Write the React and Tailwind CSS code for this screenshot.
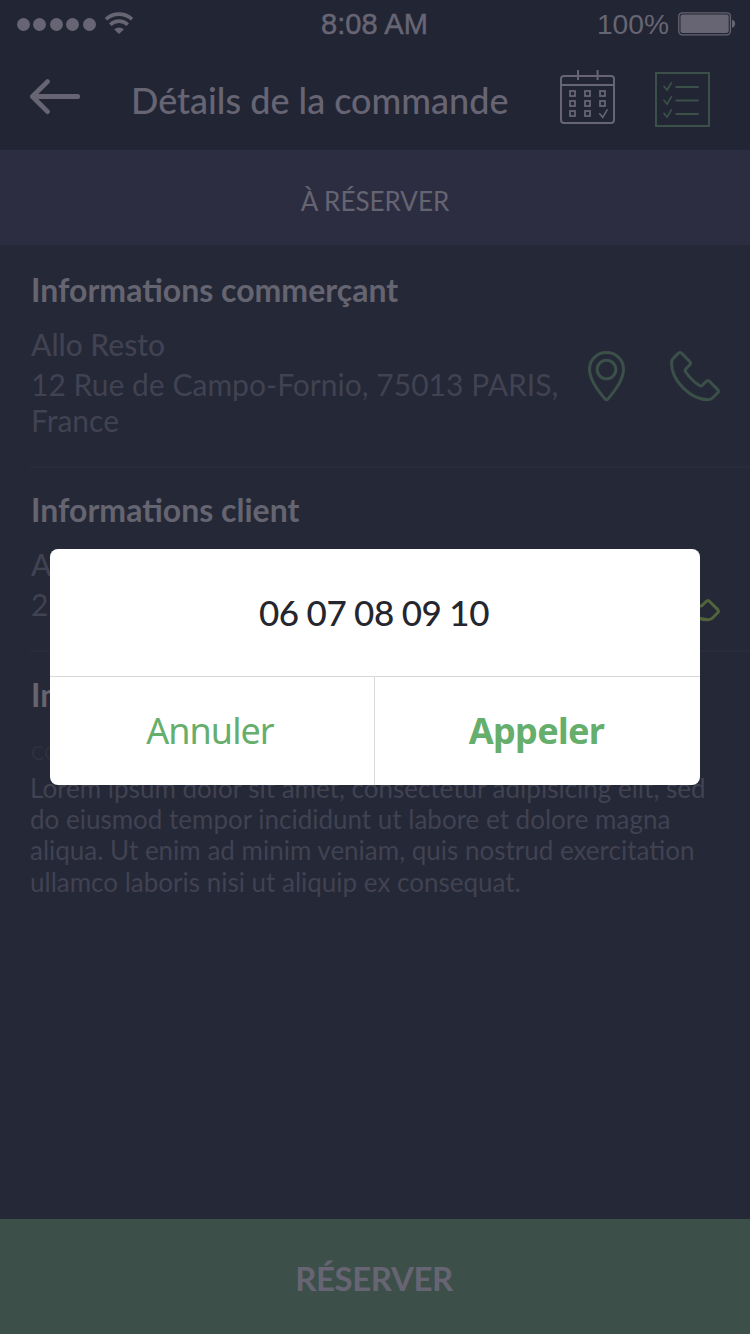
const lato = "font-[Lato,'Liberation_Sans',sans-serif]";

function WifiIcon() {
  return (
    <svg width="28" height="22" viewBox="0 0 28 22" fill="none" stroke="#676573" strokeWidth="3.6">
      <path d="M1 7.3a19 19 0 0 1 26 0" />
      <path d="M5.3 12.7a12.4 12.4 0 0 1 17.4 0" />
      <path d="M9.2 17.4a6.8 6.8 0 0 1 9.6 0L14 22z" fill="#676573" stroke="none" />
    </svg>
  );
}

function BatteryIcon() {
  return (
    <svg width="58" height="24" viewBox="0 0 58 24" fill="none">
      <rect x="0.8" y="0.8" width="51.6" height="22" rx="3.5" stroke="#676573" strokeWidth="1.3" />
      <rect x="2.5" y="2.5" width="48.2" height="18.6" rx="2" fill="#676573" />
      <path d="M54 7.8c4.2 1 4.2 7 0 8z" fill="#676573" />
    </svg>
  );
}

function BackIcon() {
  return (
    <svg width="50" height="36" viewBox="0 0 50 36" fill="none" stroke="#676573" strokeWidth="4.8" strokeLinecap="round" strokeLinejoin="round">
      <path d="M17.5 2.6 2.4 17.5l15.1 15.1M3 17.5h44.7" />
    </svg>
  );
}

function CalendarIcon() {
  const cells = [
    [10, 21], [25, 21], [40, 21],
    [10, 31], [25, 31], [40, 31],
    [10, 41], [25, 41],
  ];
  return (
    <svg width="55" height="55" viewBox="0 0 55 55" fill="none" stroke="#676573" strokeWidth="2">
      <rect x="1" y="6" width="53" height="47" rx="3" />
      <path d="M1 15h53M18 0v10M37.6 0v10" />
      {cells.map(([x, y]) => (
        <rect key={`${x}-${y}`} x={x} y={y} width="5" height="5" strokeWidth="1.8" />
      ))}
      <path d="m39.3 43.3 3.4 4 4.8-8" strokeWidth="1.6" />
    </svg>
  );
}

function ChecklistIcon() {
  return (
    <svg width="55" height="55" viewBox="0 0 55 55" fill="none" stroke="#3b5049" strokeWidth="2">
      <rect x="1" y="1" width="53" height="53" />
      <path d="M21.3 15h21.6M21.3 28.5h21.6M21.3 42h21.6" strokeWidth="2.2" strokeLinecap="round" />
      <path d="m8.5 13.8 3.6 4.2 4.6-7.8M8.5 27.8l3.6 4.2 4.6-7.8M8.5 40.9l3.6 4.2 4.6-7.8" strokeWidth="1.7" />
    </svg>
  );
}

function PinIcon() {
  return (
    <svg width="38" height="51" viewBox="0 0 38 51" fill="none" stroke="#3b5049" strokeWidth="3" strokeLinejoin="round">
      <path d="M18.5 1.5C9 1.5 1.5 9 1.5 18c0 11.5 10.5 24.2 15.8 30.2q1.2 1.3 2.4 0C25 42.2 35.5 29.5 35.5 18c0-9-7.5-16.5-17-16.5z" />
      <circle cx="18.5" cy="18.5" r="9.3" />
    </svg>
  );
}

function PhoneIcon({ color }) {
  return (
    <svg width="51" height="51" viewBox="0 0 51 51" fill="none" stroke={color} strokeWidth="3" strokeLinejoin="round">
      <path d="M8.2 2.4 3.2 7.4Q1.5 9.2 1.5 12C1.5 30 21 48.7 38 48.7q2.8 0 4.5-1.7l5-5q1.8-1.8 0-3.6l-7.6-7.7q-2-2-4 0L32.2 34.4q-1.2 1.2-2.8.2C24 31 19 26 15.6 20.8q-1-1.5.2-2.9l3.7-3.7q2-2 0-4L11.8 2.4q-1.8-1.8-3.6 0z" />
    </svg>
  );
}

function SectionTitle({ children }) {
  return (
    <h2 className="h-10 pl-px text-[32px] leading-10 font-bold whitespace-nowrap text-[#656471]">{children}</h2>
  );
}

export default function App() {
  return (
    <div className={`relative flex h-[1334px] w-[750px] flex-col overflow-hidden bg-[#252836] ${lato}`}>
      <header className="flex h-[150px] flex-col bg-[#222533] text-[#676573]">
        <div className="grid h-12 grid-cols-[1fr_auto_1fr] items-center pr-[14px] pl-[17px] font-['Liberation_Sans',sans-serif]">
          <div className="flex items-center gap-[3.4px]">
            {[0, 1, 2, 3, 4].map((n) => (
              <span key={n} className="size-[13px] rounded-full bg-[#676573]" />
            ))}
            <span className="-mt-0.5 ml-[6px]">
              <WifiIcon />
            </span>
          </div>
          <div className="-ml-0.5 pt-0.5 pr-0.5 text-[29px] tracking-[0.1px] [-webkit-text-stroke:0.5px_#676573]">8:08 AM</div>
          <div className="flex items-center justify-end gap-[9px]">
            <span className="text-[28.2px]">100%</span>
            <BatteryIcon />
          </div>
        </div>
        <div className="flex h-[102px] items-start pl-[30px]">
          <div className="mt-[31px]">
            <BackIcon />
          </div>
          <h1 className="mt-8 ml-[51px] w-[378px] text-[36px] leading-10 font-medium whitespace-nowrap">
            Détails de la commande
          </h1>
          <div className="mt-[22px] ml-[51px]">
            <CalendarIcon />
          </div>
          <div className="mt-[24px] ml-10">
            <ChecklistIcon />
          </div>
        </div>
      </header>

      <div className="flex h-[95px] items-center justify-center bg-[#2d2d42] pt-[7px] text-[26px] text-[#656471]">
        À RÉSERVER
      </div>

      <main className="flex flex-1 flex-col pl-[30px] text-[#414252]">
        <section className="border-b-2 border-[#2b2b3d] pt-[25px] pb-[28px]">
          <SectionTitle>Informations commerçant</SectionTitle>
          <div className="mt-[16px] flex">
            <div className="w-[558px] pl-px text-[30px] leading-9 whitespace-nowrap">
              <p className="font-medium">Allo Resto</p>
              <p className="mt-1 tracking-[0.02px]">
                12 Rue de Campo-Fornio, 75013 PARIS,
                <br />
                France
              </p>
            </div>
            <div className="flex gap-11 pt-[25px]">
              <PinIcon />
              <PhoneIcon color="#3b5049" />
            </div>
          </div>
        </section>

        <section className="border-b-2 border-[#2b2b3d] pt-[22px] pb-[28px]">
          <SectionTitle>Informations client</SectionTitle>
          <div className="mt-[16px] flex h-[76px]">
            <div className="w-[640px] pl-px text-[30px] leading-9">
              <p className="font-medium">A</p>
              <p className="mt-1">23</p>
            </div>
            <div className="pt-[25px]">
              <PhoneIcon color="#52643b" />
            </div>
          </div>
        </section>

        <section className="pt-[23px]">
          <SectionTitle>In</SectionTitle>
          <p className="mt-[25px] pl-px text-[20px] leading-6 text-[#30313f]">CO</p>
          <p className="mt-[9px] text-[26px] leading-[31.2px] whitespace-nowrap">
            Lorem ipsum dolor sit amet, consectetur adipisicing elit, sed
            <br />
            do eiusmod tempor incididunt ut labore et dolore magna
            <br />
            aliqua. Ut enim ad minim veniam, quis nostrud exercitation
            <br />
            ullamco laboris nisi ut aliquip ex consequat.
          </p>
        </section>
      </main>

      <button className="flex h-[115px] items-center justify-center bg-[#3c5049] pt-[5px] pr-0.5 text-[33px] font-bold tracking-[-0.4px] text-[#676573]">
        RÉSERVER
      </button>

      <div role="dialog" className="absolute top-[549px] left-[50px] flex h-[236px] w-[650px] flex-col overflow-hidden rounded-lg bg-white">
        <p className="flex h-[127px] items-center justify-center pr-0.5 text-[35px] font-medium tracking-[-0.35px] text-[#25262e] [word-spacing:-0.8px]">
          06 07 08 09 10
        </p>
        <div className="flex flex-1 border-t border-[#d8d8d8] font-['Noto_Sans',sans-serif] text-[36px] text-[#66ae6c]">
          <button className="w-[325px] border-r border-[#d8d8d8] pr-1 tracking-[-0.95px]">Annuler</button>
          <button className="flex-1 pr-0.5 font-bold tracking-[-0.7px]">Appeler</button>
        </div>
      </div>
    </div>
  );
}
